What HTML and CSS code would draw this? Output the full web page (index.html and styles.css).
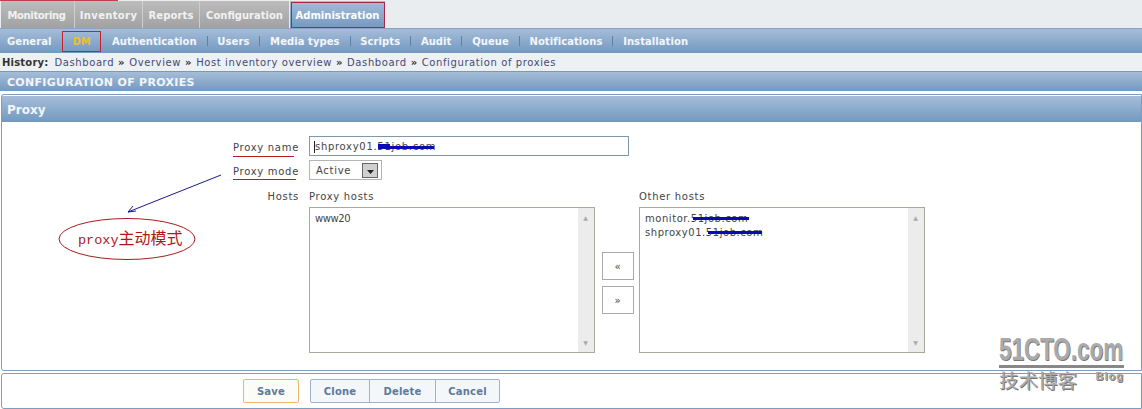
FILE: index.html
```html
<!DOCTYPE html>
<html>

<head>
    <meta charset="utf-8">
    <title>Configuration of proxies</title>
    <link rel="stylesheet" href="styles.css">
</head>

<body>
    <div class="page">
        <div class="red_top"></div>
        <div class="main_menu">
            <a class="tab tab_monitoring">Monitoring</a>
            <a class="tab tab_inventory">Inventory</a>
            <a class="tab tab_reports">Reports</a>
            <a class="tab tab_config">Configuration</a>
            <a class="tab tab_active">Administration</a>
        </div>
        <div class="sub_menu">
            <a class="sub_link">General</a>
            <a class="sub_link sub_dm">DM</a>
            <a class="sub_link">Authentication</a><i></i>
            <a class="sub_link">Users</a><i></i>
            <a class="sub_link">Media types</a><i></i>
            <a class="sub_link">Scripts</a><i></i>
            <a class="sub_link">Audit</a><i></i>
            <a class="sub_link">Queue</a><i></i>
            <a class="sub_link">Notifications</a><i></i>
            <a class="sub_link">Installation</a>
        </div>
        <div class="history">
            <b>History:</b>
            <span>Dashboard</span><em>»</em>
            <span>Overview</span><em>»</em>
            <span>Host inventory overview</span><em>»</em>
            <span>Dashboard</span><em>»</em>
            <span>Configuration of proxies</span>
        </div>
        <div class="section_title">CONFIGURATION OF PROXIES</div>

        <div class="panel">
            <div class="panel_title">Proxy</div>
            <div class="form_grid">
                <label>Proxy name</label>
                <div class="name_input"><span class="caret"></span>shproxy01.51job.com</div>

                <label>Proxy mode</label>
                <div class="mode_select">
                    <span>Active</span>
                    <span class="select_btn"><svg width="7" height="4" viewBox="0 0 7 4"><path d="M0 0h7L3.500 4z" fill="#222"/></svg></span>
                </div>

                <label class="hosts_label">Hosts</label>
                <div class="hosts">
                    <div class="host_col">
                        <div class="col_title">Proxy hosts</div>
                        <div class="list_box">
                            <div class="list_items list_tight">www20</div>
                            <div class="scroll"><u>▲</u><u>▼</u></div>
                        </div>
                    </div>
                    <div class="move_btns">
                        <div class="move_btn">«</div>
                        <div class="move_btn">»</div>
                    </div>
                    <div class="host_col">
                        <div class="col_title">Other hosts</div>
                        <div class="list_box">
                            <div class="list_items">monitor.51job.com<br>shproxy01.51job.com</div>
                            <div class="scroll"><u>▲</u><u>▼</u></div>
                        </div>
                    </div>
                </div>
            </div>
        </div>

        <div class="footer_panel">
            <div class="btn btn_save">Save</div>
            <div class="btn_group">
                <div class="btn btn_clone">Clone</div>
                <div class="btn btn_delete">Delete</div>
                <div class="btn btn_cancel">Cancel</div>
            </div>
        </div>

        <!-- hand drawn notes on top of the screenshot -->
        <svg class="notes" width="1142" height="409" viewBox="0 0 1142 409">
            <rect x="291.500" y="2.500" width="93" height="25" fill="none" stroke="#a52a4a"/>
            <rect x="62.500" y="31.500" width="38" height="20" fill="none" stroke="#c8202c"/>
            <path d="M233 156.500h61M233 179.500h63" stroke="#b81c1c" fill="none"/>
            <path d="M221 175L128 212" stroke="#1a1a8c" fill="none"/>
            <path d="M128 212l8-1M128 212l5-6" stroke="#1a1a8c" fill="none"/>
            <ellipse cx="127" cy="239" rx="68" ry="20.500" fill="#fff" stroke="#a81c1c"/>
            <path d="M378 147.500h56" stroke="#0a0ab4" stroke-width="3" fill="none"/>
            <path d="M378 145.500h12" stroke="#0a0ab4" stroke-width="3" fill="none"/>
            <path d="M693 218.500h56M708 232.500h54" stroke="#0a0ab4" stroke-width="3" fill="none"/>
        </svg>
        <div class="oval_text">proxy<span>主动模式</span></div>
        <div class="logo">
            <div class="logo_main"><span>51CTO.com</span></div>
            <div class="logo_sub"><span>技术博客</span><small>Blog</small></div>
        </div>
    </div>
</body>

</html>
```

FILE: styles.css
```css
* {
    box-sizing: border-box;
}

body {
    margin: 0;
    background: #fff;
    font-family: "DejaVu Sans", Verdana, sans-serif;
    font-size: 10px;
    color: #333;
}

.page {
    position: relative;
    width: 1142px;
    height: 409px;
    overflow: hidden;
}

.red_top {
    position: absolute;
    left: 0;
    top: 0;
    width: 118px;
    height: 1px;
    background: #c0404a;
}

.main_menu {
    display: flex;
    height: 29px;
    padding: 1px 0 0 1px;
    background: #e9edf0;
    border-bottom: 1px solid #8ba3c0;
}

.tab {
    display: block;
    height: 27px;
    padding: 9px 0 0 0;
    background: linear-gradient(#bcbcbc, #a2a2a2);
    border-right: 1px solid #cfcfcf;
    color: #f2f2f2;
    font-weight: bold;
    text-align: center;
}

.tab_monitoring {
    width: 74px;
    padding-right: 2px;
    letter-spacing: -0.35px;
}

.tab_inventory {
    width: 68px;
    letter-spacing: 0.35px;
}

.tab_reports {
    width: 57px;
    letter-spacing: 0.1px;
}

.tab_config {
    width: 89px;
    border-right: 0;
}

.tab_active {
    margin-left: 1px;
    width: 95px;
    background: linear-gradient(#a4bdd8, #7599c0);
    border-right: 0;
    color: #fff;
}

.sub_menu {
    display: flex;
    align-items: center;
    height: 24px;
    padding-left: 7px;
    background: linear-gradient(#a5bdd8, #7399c0);
    color: #fff;
    font-weight: bold;
    letter-spacing: 0.07px;
}

.sub_link {
    color: #f4f6fa;
}

.sub_menu i {
    width: 1px;
    height: 10px;
    margin: 0 9.700px 0 10px;
    background: #5d7fa8;
}

.sub_dm {
    margin: 0 21px 0 21px;
    color: #e8c030;
}

.history {
    display: flex;
    align-items: center;
    gap: 4px;
    height: 19px;
    padding-left: 2px;
    background: #edf1f4;
    border-bottom: 1px solid #7f97b5;
    color: #444a78;
    font-size: 10px;
    letter-spacing: 0.6px;
}

.history b {
    margin-right: 2px;
    color: #333;
    letter-spacing: 0.2px;
}

.history em {
    font-style: normal;
    font-weight: bold;
    color: #333;
}

.section_title {
    height: 19px;
    padding: 4px 0 0 7px;
    background: linear-gradient(#a5bdd8, #7399c0);
    color: #f2f5f9;
    font-size: 11px;
    font-weight: bold;
    line-height: 13px;
    letter-spacing: 0.3px;
}

.panel {
    height: 277px;
    margin: 3px 0 0 1px;
    padding-top: 1px;
    border: 1px solid #7f9cc0;
    border-radius: 3px 0 0 3px;
}

.panel_title {
    height: 26px;
    padding: 7px 0 0 5px;
    background: linear-gradient(#a5bdd8, #7399c0);
    color: #f2f5f9;
    font-size: 12px;
    font-weight: bold;
}

.form_grid {
    display: grid;
    grid-template-columns: 297px 1fr;
    grid-template-rows: 20px 20px auto;
    row-gap: 4px;
    column-gap: 10px;
    padding-top: 14px;
    color: #444;
    letter-spacing: 0.7px;
}

.form_grid label {
    padding-top: 6px;
    text-align: right;
    color: #444;
}

.form_grid .hosts_label {
    padding-top: 7px;
}

.name_input {
    display: flex;
    align-items: center;
    width: 320px;
    padding: 1px 0 0 4px;
    border: 1px solid #7e99ad;
}

.caret {
    width: 1px;
    height: 12px;
    background: #222;
}

.mode_select {
    display: flex;
    align-items: center;
    justify-content: space-between;
    width: 73px;
    padding: 1px 3px 0 6px;
    border: 1px solid #b4b4b4;
}

.select_btn {
    display: flex;
    align-items: center;
    justify-content: center;
    width: 16px;
    height: 15px;
    padding-top: 2px;
    background: #d0d0d0;
    border: 1px solid #666;
}

.hosts {
    display: flex;
    margin-top: 3px;
}

.host_col {
    width: 286px;
}

.col_title {
    height: 20px;
    padding-top: 4px;
}

.list_box {
    display: flex;
    height: 146px;
    border: 1px solid #aaa89c;
}

.list_items {
    flex: 1;
    padding: 4px 5px;
    line-height: 14px;
    letter-spacing: 0.55px;
}

.list_tight {
    letter-spacing: -0.4px;
}

.scroll {
    display: flex;
    flex-direction: column;
    justify-content: space-between;
    width: 16px;
    padding: 6px 0;
    background: #ececec;
    color: #aaa;
    font-size: 6px;
    text-align: center;
}

.scroll u {
    text-decoration: none;
}

.move_btns {
    display: flex;
    flex-direction: column;
    gap: 6px;
    width: 32px;
    margin: 65px 5px 0 7px;
}

.move_btn {
    display: flex;
    align-items: center;
    justify-content: center;
    height: 28px;
    border: 1px solid #aaa;
    font-size: 10px;
}

.footer_panel {
    display: flex;
    gap: 11px;
    height: 36px;
    margin: 2px 0 0 1px;
    padding: 5px 0 0 241px;
    border: 1px solid #7f9cc0;
    border-radius: 3px 0 0 3px;
}

.btn {
    display: flex;
    align-items: center;
    justify-content: center;
    height: 24px;
    background: #f4f7fa;
    border: 1px solid #9fb2c8;
    color: #5c7a9c;
    font-weight: bold;
    letter-spacing: 0.2px;
}

.btn_save {
    width: 56px;
    background: #fbfbf8;
    border-color: #eeb76a;
    border-radius: 2px;
}

.btn_group {
    display: flex;
}

.btn_clone {
    width: 60px;
    border-radius: 2px 0 0 2px;
}

.btn_delete {
    width: 67px;
    margin-left: -1px;
}

.btn_cancel {
    width: 65px;
    margin-left: -1px;
    border-radius: 0 2px 2px 0;
}

.notes {
    position: absolute;
    left: 0;
    top: 0;
    pointer-events: none;
}

.oval_text {
    position: absolute;
    left: 78px;
    top: 228px;
    color: #b01818;
    font-family: "Liberation Mono", "Noto Sans CJK SC", monospace;
    font-size: 13.500px;
    line-height: 18px;
    white-space: nowrap;
}

.oval_text span {
    font-family: "Noto Sans CJK SC", sans-serif;
    font-size: 16px;
}

.logo {
    position: absolute;
    left: 999px;
    top: 333px;
    width: 125px;
    color: #aaa;
    text-shadow: 1px 1px 0 #777;
}

.logo_main {
    height: 35px;
    border-bottom: 3px solid #888;
    font-family: "Liberation Sans", sans-serif;
    font-size: 32px;
    font-weight: bold;
    line-height: 32px;
    white-space: nowrap;
}

.logo_main span {
    display: inline-block;
    transform: scaleX(0.7);
    transform-origin: left top;
}

.logo_sub {
    display: flex;
    justify-content: space-between;
    font-family: "Noto Sans CJK SC", sans-serif;
    font-size: 19.500px;
    line-height: 24px;
}

.logo_sub small {
    margin-top: 1px;
    font-family: "Liberation Sans", sans-serif;
    font-size: 11px;
    font-weight: bold;
    line-height: 14px;
    letter-spacing: 1px;
}
```
